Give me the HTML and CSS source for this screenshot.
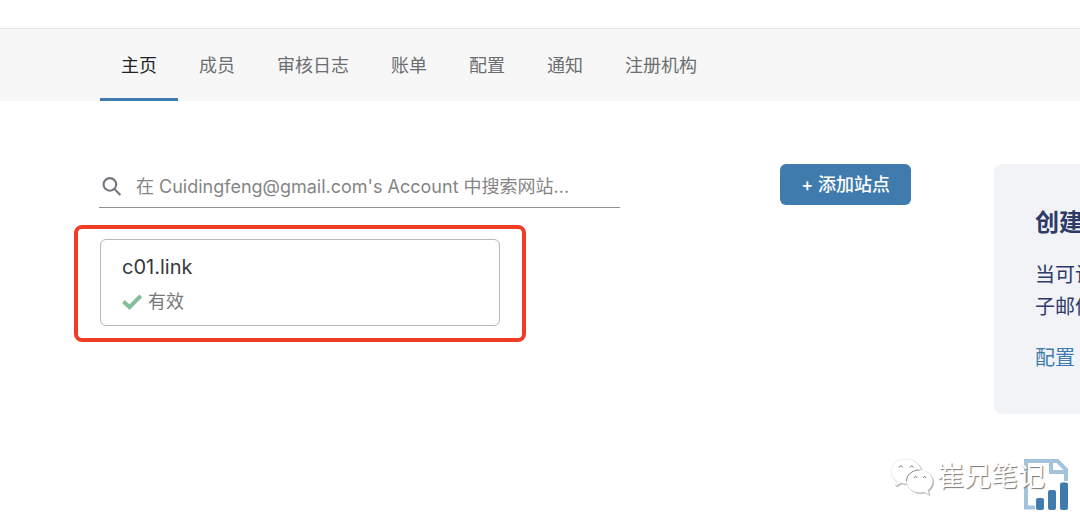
FILE: index.html
```html
<!DOCTYPE html>
<html lang="zh-CN">
<head>
<meta charset="utf-8">
<meta name="viewport" content="width=device-width, initial-scale=1">
<title>主页</title>
<link rel="stylesheet" href="styles.css">
</head>
<body>
<nav class="tabs">
  <a class="tab active" href="#" aria-current="page">主页</a>
  <a class="tab" href="#">成员</a>
  <a class="tab" href="#">审核日志</a>
  <a class="tab" href="#">账单</a>
  <a class="tab" href="#">配置</a>
  <a class="tab" href="#">通知</a>
  <a class="tab" href="#">注册机构</a>
</nav>
<main class="page">
  <section class="sites">
    <div class="toolbar">
      <label class="search">
        <svg class="search-icon" viewBox="0 0 20 20" aria-hidden="true"><circle cx="7.500" cy="8" r="6"/><path d="M12 12.500 17.500 18"/></svg>
        <input class="search-input" type="text" aria-label="搜索网站" placeholder="在 Cuidingfeng@gmail.com's Account 中搜索网站...">
      </label>
      <button class="add" type="button">+ 添加站点</button>
    </div>
    <div class="highlight">
      <a class="site" href="#">
        <span class="site-name">c01.link</span>
        <span class="status">
          <svg class="check" viewBox="0 0 20 16" aria-hidden="true"><path d="M1.500 7.500 7.500 13.200 18.700 2"/></svg>
          有效
        </span>
      </a>
    </div>
  </section>
  <aside class="side">
    <div class="card">
      <h2 class="card-title">创建</h2>
      <p class="card-text">当可计<br>子邮件</p>
      <a class="card-link" href="#">配置</a>
    </div>
    <svg class="report" viewBox="0 0 44 52" aria-hidden="true">
      <path class="sheet" d="M11 48.500H2V2h31.500L42 10.500V22M27 2v11h15"/>
      <path class="bars" d="M14 39h4q2 0 2 2v8q0 2-2 2h-4q-2 0-2-2v-8q0-2 2-2zM26 31h4q2 0 2 2v16q0 2-2 2h-4q-2 0-2-2V33q0-2 2-2zM38 23.500h4q2 0 2 2V49q0 2-2 2h-4q-2 0-2-2V25.500q0-2 2-2z"/>
    </svg>
  </aside>
</main>
<div class="watermark">
  <svg class="bubbles" viewBox="0 0 44 38" aria-hidden="true">
    <path d="M16 1C7.500 1 1 6.500 1 13.500c0 4 2.200 7.500 5.800 9.800L5.500 28l5.500-3c1.600.5 3.300.7 5 .7C24.500 25.700 31 20.300 31 13.500S24.500 1 16 1z"/>
    <path d="M29.500 12C22 12 16.500 17 16.500 23.200S22 34.500 29.500 34.500c1.500 0 3-.2 4.400-.6L39 36.500l-1.300-4.200c3-2 4.900-5.300 4.900-9.100C42.600 17 37 12 29.500 12z"/>
    <path class="rim" d="M16.500 23.200C16.500 17 22 12 29.500 12"/>
    <path class="eyes" d="M9 9.500q1.800-3.500 3.600 0M20 9.500q1.800-3.500 3.600 0M24 20q1.600-3.200 3.200 0M33 20q1.600-3.200 3.200 0"/>
  </svg>
  <span>崔兄笔记</span>
</div>
</body>
</html>
```
FILE: styles.css
```css
* {
  box-sizing: border-box;
}

body {
  margin: 0;
  position: relative;
  overflow-x: hidden;
  background: #fff;
  color: #36393a;
  font-family: Inter, "Noto Sans CJK SC", sans-serif;
  font-size: 18px;
  line-height: 28px;
}

a {
  text-decoration: none;
}

.tabs {
  display: flex;
  margin-top: 28px;
  padding-left: 100px;
  background: #f7f7f7;
  border-top: 1px solid #e6e6e6;
}

.tab {
  padding: 23px 21px 18px;
  border-bottom: 3px solid transparent;
  color: #6b6e70;
}

.tab.active {
  color: #222;
  border-bottom-color: #407bad;
}

.page {
  display: flex;
  gap: 83px;
  padding: 63px 0 14px 99px;
  overflow: hidden;
}

.sites {
  flex: 0 0 812px;
}

.toolbar {
  display: flex;
  justify-content: space-between;
  align-items: flex-start;
}

.search {
  display: flex;
  align-items: center;
  gap: 13px;
  width: 521px;
  height: 44px;
  padding: 2px 0 0 3px;
  border-bottom: 1px solid #8e9096;
}

.search-icon {
  width: 21px;
  height: 21px;
  fill: none;
  stroke: #6f757b;
  stroke-width: 2;
}

.search-input {
  flex: 1;
  min-width: 0;
  padding: 0;
  border: 0;
  outline: 0;
  background: none;
  font: inherit;
}

.search-input::placeholder {
  color: #858585;
  opacity: 1;
}

.add {
  padding: 7px 21px 6px;
  border: 0;
  border-radius: 6px;
  background: #407bad;
  color: #fff;
  font: inherit;
  font-weight: 500;
}

.highlight {
  width: 452px;
  margin: 17px 0 0 -25px;
  padding: 10px 22px 12px;
  border: 4px solid #f03e26;
  border-radius: 8px;
}

.site {
  display: flex;
  flex-direction: column;
  gap: 7px;
  padding: 13px 21px 9px;
  border: 1px solid #b5b7b8;
  border-radius: 6px;
}

.site-name {
  color: #36393a;
  font-size: 20px;
}

.status {
  display: flex;
  align-items: center;
  gap: 6px;
  color: #76797b;
}

.check {
  width: 20px;
  height: 16px;
  fill: none;
  stroke: #83bf98;
  stroke-width: 4;
}

.side {
  flex: 0 0 300px;
}

.card {
  padding: 43px 41px 41px;
  border-radius: 8px;
  background: #f1f3f7;
  color: #2e3a67;
}

.card-title {
  margin: 0;
  font-size: 24px;
  line-height: 32px;
}

.card-text {
  margin: 20px 0;
  font-size: 20px;
  line-height: 32px;
}

.card-link {
  display: block;
  color: #407bad;
  font-size: 20px;
  line-height: 30px;
}

.report {
  display: block;
  width: 44px;
  height: 52px;
  margin: 45px 0 0 30px;
}

.sheet {
  fill: none;
  stroke: #a3c3dc;
  stroke-width: 4;
}

.bars {
  fill: #407bad;
}

.watermark {
  position: absolute;
  top: 457px;
  right: 35px;
  display: flex;
  align-items: center;
  gap: 3px;
  color: #fff;
  font-size: 27px;
  line-height: 40px;
  text-shadow: 1px 1px 1px #777;
}

.bubbles {
  width: 44px;
  height: 38px;
  fill: #fff;
  stroke: #ddd;
  stroke-width: 0.5;
  filter: drop-shadow(1px 1px 0 #aaa);
}

.bubbles .rim {
  fill: none;
  stroke: #888;
  stroke-width: 1;
}

.bubbles .eyes {
  fill: none;
  stroke: #777;
  stroke-width: 1;
}
```
